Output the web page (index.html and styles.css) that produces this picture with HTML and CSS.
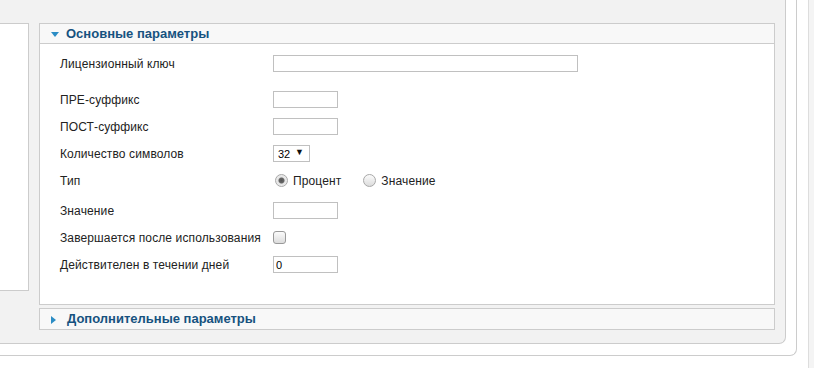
FILE: index.html
```html
<!DOCTYPE html>
<html lang="ru">
<head>
    <meta charset="UTF-8">
    <meta name="viewport" content="width=device-width, initial-scale=1.0">
    <title>Параметры</title>
    <link rel="stylesheet" href="styles.css">
</head>
<body>
    <div class="page">
        <div class="outer">
            <div class="panel">
                <div class="sidebar"></div>
                <div class="main">
                    <div class="pane open">
                        <div class="pane-title"><span class="arrow"></span>Основные параметры</div>
                        <div class="pane-body">
                            <div class="row first">
                                <label>Лицензионный ключ</label>
                                <input type="text" class="inp wide">
                            </div>
                            <div class="row">
                                <label>ПРЕ-суффикс</label>
                                <input type="text" class="inp">
                            </div>
                            <div class="row">
                                <label>ПОСТ-суффикс</label>
                                <input type="text" class="inp">
                            </div>
                            <div class="row">
                                <label>Количество символов</label>
                                <span class="sel">
                                    <select>
                                        <option>32</option>
                                        <option>16</option>
                                        <option>8</option>
                                    </select>
                                </span>
                            </div>
                            <div class="row">
                                <label>Тип</label>
                                <span class="radios">
                                    <label class="opt"><input type="radio" name="type" checked> Процент</label>
                                    <label class="opt"><input type="radio" name="type"> Значение</label>
                                </span>
                            </div>
                            <div class="row shift">
                                <label>Значение</label>
                                <input type="text" class="inp">
                            </div>
                            <div class="row">
                                <label>Завершается после использования</label>
                                <input type="checkbox" class="chk">
                            </div>
                            <div class="row">
                                <label>Действителен в течении дней</label>
                                <input type="text" class="inp" value="0">
                            </div>
                        </div>
                    </div>
                    <div class="pane">
                        <div class="pane-title"><span class="arrow"></span>Дополнительные параметры</div>
                    </div>
                </div>
            </div>
        </div>
        <div class="strip"></div>
    </div>
</body>
</html>
```

FILE: styles.css
```css
* { margin:0; padding:0; box-sizing: border-box; }
body {
    background: #fff;
    font-family: "Liberation Sans", Arial, sans-serif;
    font-size: 12px;
    color: #222;
}
.page {
    display: flex;
    height: 368px;
}
.outer {
    width: 797px;
    height: 356px;
    padding-right: 10px;
    padding-bottom: 11px;
    border-right: 1px solid #ccc;
    border-bottom: 1px solid #ccc;
    border-bottom-right-radius: 7px;
}
.panel {
    display: flex;
    height: 100%;
    padding: 23px 10px 13px 0;
    background: #f2f2f2;
    border-right: 1px solid #ccc;
    border-bottom: 1px solid #ccc;
    border-bottom-right-radius: 7px;
}
.sidebar {
    width: 29px;
    height: 268px;
    background: #fff;
    border: 1px solid #ccc;
    border-left: none;
    margin-right: 10px;
}
.main {
    flex: 1;
}
.strip {
    margin-left: 11px;
    flex: 1;
    background: #f4f4f4;
    border-left: 1px solid #ddd;
}
.pane {
    border: 1px solid #ccc;
    background: #fff;
    margin-bottom: 3px;
}
.pane-title {
    height: 20px;
    line-height: 20px;
    padding-left: 11px;
    background: #f8f8f8;
    color: #16527f;
    font-size: 13px;
    font-weight: bold;
}
.open .pane-title {
    border-bottom: 1px solid #ccc;
}
.arrow {
    display: inline-block;
    width: 0;
    height: 0;
    margin-right: 7px;
    vertical-align: 1px;
    border-left: 4px solid transparent;
    border-right: 4px solid transparent;
    border-top: 5px solid #2b8cc4;
}
.pane:not(.open) .arrow {
    margin-right: 11px;
    vertical-align: -1px;
    border-top: 4px solid transparent;
    border-bottom: 4px solid transparent;
    border-left: 5px solid #2b8cc4;
    border-right: none;
}
.pane-body {
    height: 260px;
    padding: 6px 0 0 20px;
}
.row {
    display: flex;
    align-items: center;
    height: 27px;
    letter-spacing: 0.12px;
}
.row.first {
    margin-bottom: 9px;
}
.row.shift {
    margin-top: 3px;
}
.row > label {
    width: 213px;
    flex: none;
}
.inp {
    width: 65px;
    height: 17px;
    border: 1px solid #c0c0c0;
    font: 11px "Liberation Sans", Arial, sans-serif;
    padding: 0 2px;
    color: #000;
    outline: none;
}
.inp.wide {
    width: 305px;
}
.sel {
    position: relative;
    display: inline-block;
}
.sel select {
    appearance: none;
    -webkit-appearance: none;
    width: 37px;
    height: 17px;
    border: 1px solid #c0c0c0;
    background: #fff;
    font: 11px "Liberation Sans", Arial, sans-serif;
    color: #000;
    padding: 0 0 0 4px;
    outline: none;
}
.sel::after {
    content: "▼";
    position: absolute;
    left: 22px;
    top: 2px;
    font-size: 9px;
    color: #111;
    pointer-events: none;
}
.radios {
    display: flex;
    gap: 20px;
}
.opt {
    display: flex;
    align-items: center;
    gap: 5px;
}
.opt input,
.chk {
    appearance: none;
    -webkit-appearance: none;
    width: 13px;
    height: 13px;
    border: 1px solid #a8a8a8;
    background: linear-gradient(#fbfbfb, #dcdcdc);
}
.opt input {
    border-radius: 50%;
    margin-left: 2px;
}
.opt input:checked {
    background: radial-gradient(circle, #555 0, #666 2.5px, #e4e4e4 3.5px, #f4f4f4 100%);
}
.chk {
    border-radius: 3px;
    border-color: #999;
}
```
